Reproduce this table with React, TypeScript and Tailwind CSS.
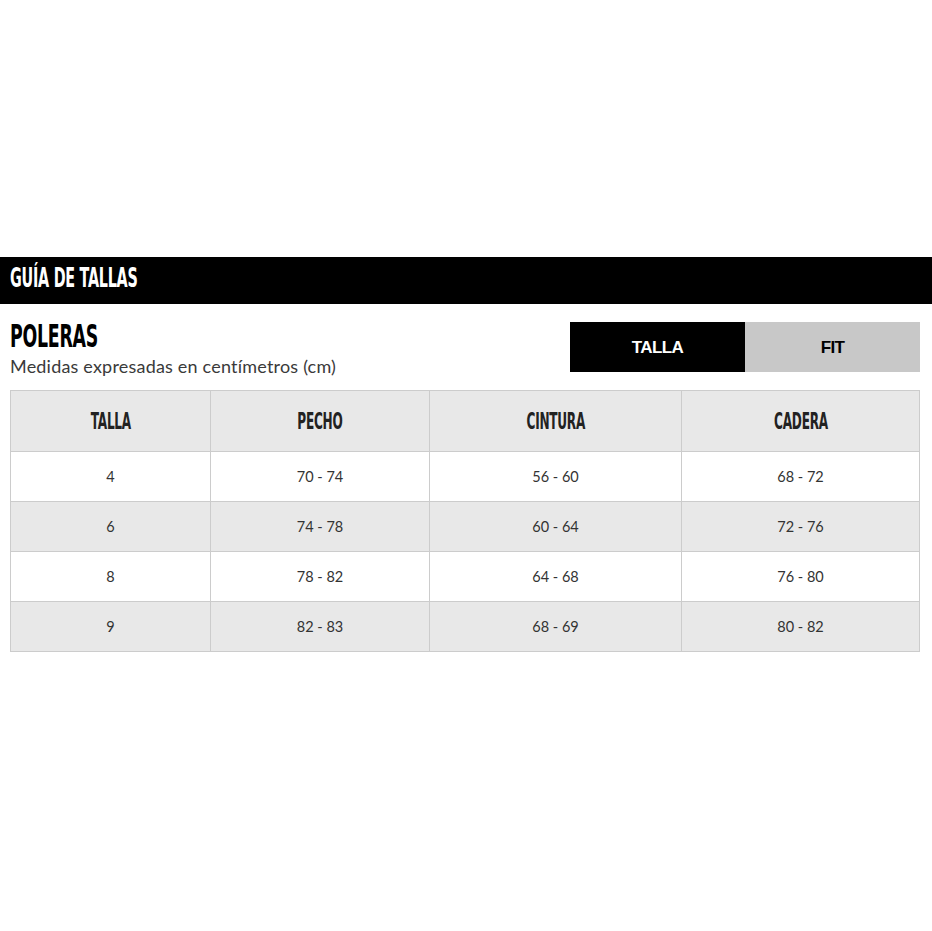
const rows = [
  ["4", "70 - 74", "56 - 60", "68 - 72"],
  ["6", "74 - 78", "60 - 64", "72 - 76"],
  ["8", "78 - 82", "64 - 68", "76 - 80"],
  ["9", "82 - 83", "68 - 69", "80 - 82"],
];

const heads = ["TALLA", "PECHO", "CINTURA", "CADERA"];

// condensed display face, squeezed to look like the tall headline font
const display = "font-['DejaVu_Sans_Condensed','DejaVu_Sans',sans-serif] font-bold inline-block";
const body = "font-['Lato','Open_Sans',sans-serif]";

export default function App() {
  return (
    <div className="min-h-screen bg-white pt-[257px]">
      <div className="h-[47px] bg-black flex items-center px-[10px]">
        <h1
          className={`${display} text-white text-[19px] leading-none tracking-[-0.3px] origin-left scale-x-[0.84] scale-y-[1.37] -mt-[5px]`}
        >
          GUÍA DE TALLAS
        </h1>
      </div>

      <div className="w-[910px] mx-[10px]">
        <div className="flex justify-between items-start mt-[17px]">
          <div>
            <h2
              className={`${display} text-black text-[23px] leading-[23px] tracking-[-0.3px] origin-top-left scale-x-[0.84] scale-y-[1.37]`}
            >
              POLERAS
            </h2>
            <p className={`${body} text-[18px] leading-[22px] tracking-[0.2px] text-[#3a3a3a] mt-[9px]`}>
              Medidas expresadas en centímetros (cm)
            </p>
          </div>
          <div className="flex mt-[1px]">
            <button className="w-[175px] h-[50px] bg-black text-white font-['Liberation_Sans',Arial,sans-serif] font-bold text-[17px] tracking-[-0.6px] pt-[2px]">
              TALLA
            </button>
            <button className="w-[175px] h-[50px] bg-[#c8c8c8] text-black font-['Liberation_Sans',Arial,sans-serif] font-bold text-[17px] tracking-[-0.6px] pt-[2px]">
              FIT
            </button>
          </div>
        </div>

        <table className="mt-[13px] w-[909px] border-collapse table-fixed">
          <colgroup>
            <col className="w-[200px]" />
            <col className="w-[219px]" />
            <col className="w-[252px]" />
            <col className="w-[238px]" />
          </colgroup>
          <thead>
            <tr className="h-[61px] bg-[#e8e8e8]">
              {heads.map((h) => (
                <th key={h} className="border border-[#cccccc] text-center">
                  <span
                    className={`${display} text-[16px] leading-none text-[#222] tracking-[-0.3px] scale-x-[0.84] scale-y-[1.46]`}
                  >
                    {h}
                  </span>
                </th>
              ))}
            </tr>
          </thead>
          <tbody>
            {rows.map((r, i) => (
              <tr key={i} className={`h-[50px] ${i % 2 === 1 ? "bg-[#e8e8e8]" : "bg-white"}`}>
                {r.map((c, j) => (
                  <td key={j} className={`${body} border border-[#cccccc] text-center text-[14.5px] text-[#333]`}>
                    {c}
                  </td>
                ))}
              </tr>
            ))}
          </tbody>
        </table>
      </div>
    </div>
  );
}
